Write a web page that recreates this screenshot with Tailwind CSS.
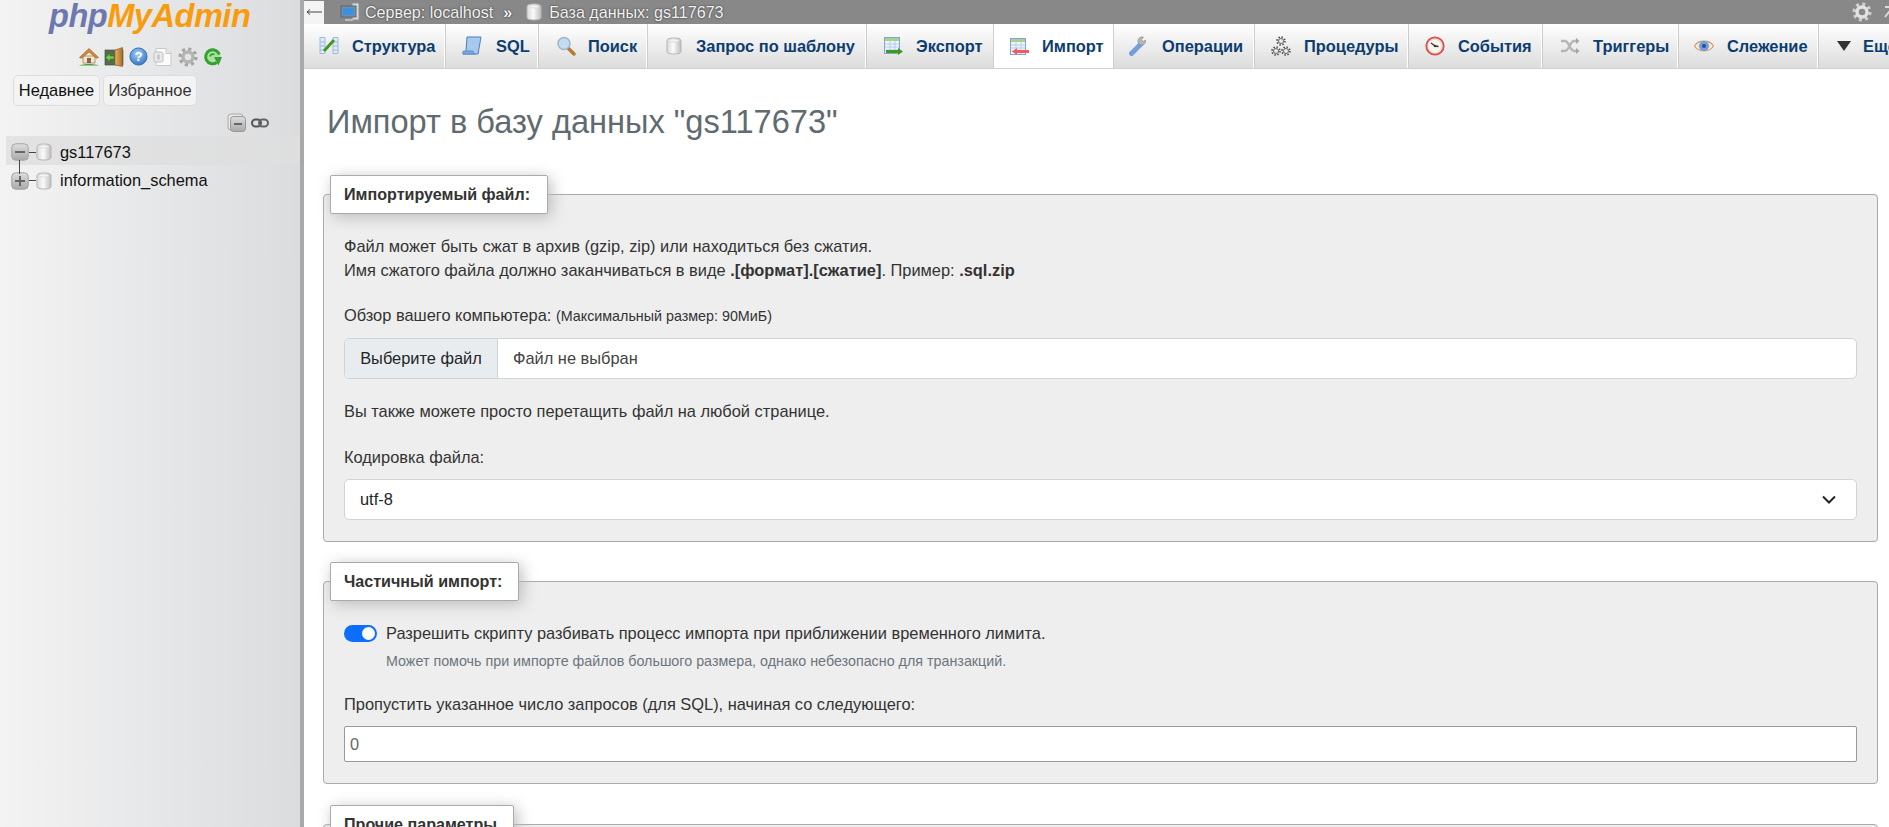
<!DOCTYPE html>
<html lang="ru">
<head>
<meta charset="UTF-8" />
<title>phpMyAdmin</title>
<script src="https://cdn.jsdelivr.net/npm/@tailwindcss/browser@4"></script>
</head>
<body class="h-screen overflow-hidden bg-white font-['Liberation_Sans',Arial,sans-serif] text-[16.4px] text-[#333]">
<svg class="absolute h-0 w-0" xmlns="http://www.w3.org/2000/svg">
	<defs>
		<linearGradient id="cyl" x1="0" x2="1" y1="0" y2="0"><stop offset="0" stop-color="#d8d8d8"/><stop offset=".45" stop-color="#fbfbfb"/><stop offset="1" stop-color="#bdbdbd"/></linearGradient>
		<linearGradient id="boxg" x1="0" x2="0" y1="0" y2="1"><stop offset="0" stop-color="#dedede"/><stop offset="1" stop-color="#a9a9a9"/></linearGradient>
		<linearGradient id="door" x1="0" x2="1" y1="0" y2="0"><stop offset="0" stop-color="#e8b464"/><stop offset="1" stop-color="#a86d2a"/></linearGradient>
		<radialGradient id="helpg" cx=".45" cy=".35" r=".7"><stop offset="0" stop-color="#a9d0f5"/><stop offset="1" stop-color="#2f6fc0"/></radialGradient>
	</defs>
	<symbol id="db" viewBox="0 0 16 18">
		<path d="M1 3.500C1 1.800 4 1 8 1s7 .8 7 2.500v11c0 1.700-3 2.500-7 2.500s-7-.8-7-2.500z" fill="url(#cyl)" stroke="#b5b5b5"/>
		<ellipse cx="8" cy="3.500" rx="5" ry="1.500" fill="#f4f4f4" stroke="#cfcfcf" stroke-width=".6"/>
	</symbol>
	<symbol id="gear" viewBox="0 0 20 20">
		<circle cx="10" cy="10" r="7.800" fill="none" stroke="#a3a3a3" stroke-width="3.600" stroke-dasharray="3 3.120"/>
		<circle cx="10" cy="10" r="5" fill="none" stroke="#b4b4b4" stroke-width="3.400"/>
	</symbol>
	<symbol id="gearlight" viewBox="0 0 20 20">
		<circle cx="10" cy="10" r="7.800" fill="none" stroke="#cfcfcf" stroke-width="3.600" stroke-dasharray="3 3.120"/>
		<circle cx="10" cy="10" r="5" fill="none" stroke="#e2e2e2" stroke-width="3.400"/>
	</symbol>
	<symbol id="cog" viewBox="0 0 20 20">
		<circle cx="10" cy="10" r="7.800" fill="none" stroke="#555" stroke-width="3.600" stroke-dasharray="3 3.120"/>
		<circle cx="10" cy="10" r="5" fill="#eee" stroke="#666" stroke-width="2"/>
	</symbol>
	<symbol id="sheet" viewBox="0 0 20 20">
		<rect x="1.500" y="1.500" width="15" height="16" fill="#eef4fb" stroke="#7fa6d6"/>
		<rect x="2" y="2" width="14" height="3" fill="#a9d08e"/>
		<path d="M2 8h14M2 11h14M2 14h14M7 5v12M12 5v12" stroke="#a9c4e4" stroke-width=".8"/>
	</symbol>
</svg>

<div class="flex h-full">
	<!-- navigation -->
	<aside class="w-[304px] shrink-0 border-r-4 border-[#a9a9a9] bg-gradient-to-r from-[#f3f3f3] to-[#dadcde]">
		<div class="h-[43px] pl-[49px] text-[32.600px] leading-[32px] font-bold italic tracking-[-0.5px] whitespace-nowrap text-[#f89c0e]"><span class="text-[#6c78af]">php</span>MyAdmin</div>
		<div class="mt-[3px] flex h-[21px] items-center pl-[79px] gap-[5px]">
			<!-- home -->
			<svg class="h-5 w-5" viewBox="0 0 20 20"><path d="M4 9v7h12V9z" fill="#f4e6c8" stroke="#a9824c" stroke-width=".8"/><path d="M.5 10.500 10 1.500l9.500 9-2 .8L10 5 2.500 11.300z" fill="#d58b32" stroke="#8a5520" stroke-width=".6"/><rect x="8" y="11" width="4" height="5" fill="#7a6a52"/><path d="M0 18.500c5-2 15-2 20 0z" fill="#4aa33c"/></svg>
			<!-- logout -->
			<svg class="h-5 w-5" viewBox="0 0 20 20"><rect x="1" y="3" width="18" height="15" fill="#5a6a50" stroke="#3c4638" stroke-width=".6"/><path d="M11 3 18.500.5v19L11 18z" fill="url(#door)" stroke="#8a5b22" stroke-width=".6"/><path d="M1.500 10.500 6 6.500v2.500h4v3H6v2.500z" fill="#6fd14c" stroke="#2f7d1c" stroke-width=".6"/></svg>
			<!-- help -->
			<svg class="h-[19px] w-[19px]" viewBox="0 0 20 20"><circle cx="10" cy="10" r="9" fill="url(#helpg)" stroke="#2f6bb0"/><text x="10" y="15" text-anchor="middle" font-family="Liberation Sans" font-weight="700" font-size="14" fill="#fff">?</text></svg>
			<!-- docs -->
			<svg class="h-5 w-5" viewBox="0 0 20 20"><path d="M3 1.500h10l5 5v12H3z" fill="#fbfbfb" stroke="#c8c8c8"/><path d="M13 1.500v5h5" fill="#e6e6e6" stroke="#c8c8c8"/><rect x="1" y="5" width="9" height="10" rx="1.500" fill="#e8e8e8" stroke="#c0c0c0"/><rect x="4.500" y="7.500" width="2" height="5" fill="#bbb"/></svg>
			<svg class="h-5 w-5"><use href="#gear"/></svg>
			<!-- reload -->
			<svg class="h-5 w-5" viewBox="0 0 20 20"><circle cx="9.500" cy="9.500" r="8" fill="#a9e3a0"/><path d="M13.800 15.500A7 7 0 1 1 16.300 7.500" fill="none" stroke="#37a033" stroke-width="3"/><path d="M11 10h8l-3.500 8.500z" fill="#37a033"/><path d="M7 9.500a3 3 0 0 1 4.500-2" fill="none" stroke="#37a033" stroke-width="1.800"/></svg>
		</div>
		<div class="mt-[8px] flex pl-[13px] gap-[3px]">
			<div class="flex h-[31px] w-[87px] items-center justify-center rounded-[5px] border border-[#ddd] bg-[#f3f3f3] text-[#111]">Недавнее</div>
			<div class="flex h-[31px] w-[94px] items-center justify-center rounded-[5px] border border-[#ddd] bg-[#f3f3f3] text-[#333]">Избранное</div>
		</div>
		<div class="mt-[6px] flex h-[22px] items-center pl-[227px] gap-[4px]">
			<svg class="h-5 w-5" viewBox="0 0 20 20"><rect x="1" y="1" width="15" height="16" rx="3" fill="#e8e8e8" stroke="#aaa"/><rect x="3.500" y="3.500" width="15" height="15" rx="3" fill="url(#boxg)" stroke="#999"/><rect x="7" y="10" width="8" height="2" fill="#666"/></svg>
			<svg class="h-[10px] w-[18px]" viewBox="0 0 18 10"><rect x="1" y="1.500" width="9" height="7" rx="3.500" fill="none" stroke="#555" stroke-width="2"/><rect x="8" y="1.500" width="9" height="7" rx="3.500" fill="none" stroke="#666" stroke-width="2"/></svg>
		</div>
		<div class="relative ml-[6px] mt-[2px]">
			<div class="absolute left-[13px] top-[24px] h-[14px] w-px bg-[#444]"></div>
			<div class="flex h-[29px] items-center bg-[#dfdfdf]/80 pl-[5px] pt-[3px]">
				<svg class="h-[18px] w-[18px] shrink-0" viewBox="0 0 18 18"><rect x=".75" y=".75" width="16.500" height="16.500" rx="4" fill="url(#boxg)" stroke="#a5a5a5"/><rect x="4" y="8" width="10" height="2" fill="#666"/></svg>
				<div class="h-px w-[7px] bg-[#444]"></div>
				<svg class="h-[18px] w-4 shrink-0"><use href="#db"/></svg>
				<span class="ml-[8px] text-[#111]">gs117673</span>
			</div>
			<div class="flex h-[28px] items-center pl-[5px] pt-[3px]">
				<svg class="h-[18px] w-[18px] shrink-0" viewBox="0 0 18 18"><rect x=".75" y=".75" width="16.500" height="16.500" rx="4" fill="url(#boxg)" stroke="#a5a5a5"/><path d="M4 8h4V4h2v4h4v2h-4v4H8v-4H4z" fill="#666"/></svg>
				<div class="h-px w-[7px] bg-[#444]"></div>
				<svg class="h-[18px] w-4 shrink-0"><use href="#db"/></svg>
				<span class="ml-[8px] text-[#111]">information_schema</span>
			</div>
		</div>
	</aside>

	<main class="min-w-0 flex-1">
		<!-- server breadcrumb -->
		<div class="flex h-[24px] items-center overflow-hidden whitespace-nowrap bg-[#888] text-[16.100px] text-[#f2f2f2] [text-shadow:0_0_2px_#222]">
			<div class="flex h-[23px] w-[20px] shrink-0 items-center justify-center bg-[#f4f4f4]"><svg class="h-2 w-4" viewBox="0 0 16 8"><path d="M1 4h15M1 4l3-2.500M1 4l3 2.500" fill="none" stroke="#444"/></svg></div>
			<svg class="ml-4 h-5 w-5 shrink-0" viewBox="0 0 20 20"><rect x="12" y="1" width="7" height="17" fill="#d9d9d9" stroke="#8e8e8e"/><rect x="1" y="4" width="15" height="11" fill="#6f8fae" stroke="#5c6670"/><rect x="3" y="6" width="11" height="7" fill="#3d8fe0"/><path d="M5 17h8v2H5z" fill="#b9b9b9"/><rect x="14" y="6" width="3" height="1" fill="#4caf50"/></svg>
			<span class="ml-[5px]">Сервер: localhost</span>
			<span class="ml-[10px] font-bold">»</span>
			<svg class="ml-[14px] h-[18px] w-4 shrink-0"><use href="#db"/></svg>
			<span class="ml-[7px]">База данных: gs117673</span>
			<svg class="ml-auto h-5 w-5 shrink-0"><use href="#gearlight"/></svg>
			<svg class="ml-[12px] mr-[-7px] h-3 w-3 shrink-0" viewBox="0 0 12 12"><path d="M1 1h8v8M9 1 1 11" fill="none" stroke="#ddd" stroke-width="2"/></svg>
		</div>
		<!-- tabs -->
		<nav class="flex h-[45px] overflow-hidden border-b border-[#d0d0d0] font-bold whitespace-nowrap text-[#0c3d70]">
			<a class="flex w-[142px] shrink-0 items-center gap-[13px] border-r border-r-[#ccc] bg-gradient-to-b from-white to-[#dcdcdc] pl-[15px] shadow-[inset_-1px_0_0_#fff]">
				<svg class="h-5 w-5 shrink-0" viewBox="0 0 20 20"><path d="M1 1.500h5v16H1zM14 1.500h5v16h-5z" fill="#dfeaf6" stroke="#9dbbdf"/><path d="M1 6h5M1 10h5M1 14h5M14 6h5M14 10h5M14 14h5" stroke="#9dbbdf"/><path d="M5 15 15 4" stroke="#3f9a22" stroke-width="3"/></svg>
				<span>Структура</span>
			</a>
			<a class="flex w-[93px] shrink-0 items-center gap-[14px] border-r border-r-[#ccc] bg-gradient-to-b from-white to-[#dcdcdc] pl-[16px] shadow-[inset_-1px_0_0_#fff]">
				<svg class="h-5 w-5 shrink-0" viewBox="0 0 20 20"><path d="M5 1h14l-3 17H1c2 0 3-2 3-3z" fill="#a9c8ee" stroke="#4a7fc2"/><path d="M1 18c-1-2 0-3 1-3h9c0 1 0 3 2 3z" fill="#7dabe0" stroke="#4a7fc2" stroke-width=".7"/></svg>
				<span>SQL</span>
			</a>
			<a class="flex w-[109px] shrink-0 items-center gap-[12px] border-r border-r-[#ccc] bg-gradient-to-b from-white to-[#dcdcdc] pl-[17px] shadow-[inset_-1px_0_0_#fff]">
				<svg class="h-5 w-5 shrink-0" viewBox="0 0 20 20"><path d="M12 12l6 6" stroke="#b57a35" stroke-width="3.500" stroke-linecap="round"/><circle cx="8" cy="7.500" r="6" fill="#c4dcf3" stroke="#9fb4c8" stroke-width="1.500"/></svg>
				<span>Поиск</span>
			</a>
			<a class="flex w-[219px] shrink-0 items-center gap-[14px] border-r border-r-[#ccc] bg-gradient-to-b from-white to-[#dcdcdc] pl-[18px] shadow-[inset_-1px_0_0_#fff]">
				<svg class="h-[18px] w-4 shrink-0"><use href="#db"/></svg>
				<span>Запрос по шаблону</span>
			</a>
			<a class="flex w-[126px] shrink-0 items-center gap-[13px] bg-gradient-to-b from-white to-[#dcdcdc] pl-[16px]">
				<svg class="h-5 w-5 shrink-0" viewBox="0 0 20 20"><use href="#sheet"/><path d="M3 14h12v-2l5 3.500-5 3.500v-2H3z" fill="#3f9a22"/></svg>
				<span>Экспорт</span>
			</a>
			<a class="flex h-[45px] w-[121px] shrink-0 items-center gap-[13px] border-x border-x-[#d0d0d0] bg-white pl-[15px]">
				<svg class="h-5 w-5 shrink-0" viewBox="0 0 20 20"><use href="#sheet"/><path d="M20 13H8v-2l-5 3.500L8 18v-2h12z" fill="#f25b5b"/></svg>
				<span>Импорт</span>
			</a>
			<a class="flex w-[141px] shrink-0 items-center gap-[13px] border-r border-r-[#ccc] bg-gradient-to-b from-white to-[#dcdcdc] pl-[15px] shadow-[inset_-1px_0_0_#fff]">
				<svg class="h-5 w-5 shrink-0" viewBox="0 0 20 20"><path d="M2.500 17.500 12 8" stroke="#6fa0dc" stroke-width="5" stroke-linecap="round"/><path d="M12 9a4 4 0 0 1 2-8l.5.2-2 2.300 1.500 2 2.500-1.500A4 4 0 0 1 12 9z" fill="#b5b5b5" stroke="#888" stroke-width=".6"/></svg>
				<span>Операции</span>
			</a>
			<a class="flex w-[154px] shrink-0 items-center gap-[13px] border-r border-r-[#ccc] bg-gradient-to-b from-white to-[#dcdcdc] pl-[16px] shadow-[inset_-1px_0_0_#fff]">
				<svg class="h-5 w-5 shrink-0" viewBox="0 0 20 20"><use href="#cog" x="5" y="0" width="10" height="10"/><use href="#cog" x="0" y="10" width="10" height="10"/><use href="#cog" x="10" y="10" width="10" height="10"/></svg>
				<span>Процедуры</span>
			</a>
			<a class="flex w-[134px] shrink-0 items-center gap-[13px] border-r border-r-[#ccc] bg-gradient-to-b from-white to-[#dcdcdc] pl-[16px] shadow-[inset_-1px_0_0_#fff]">
				<svg class="h-5 w-5 shrink-0" viewBox="0 0 20 20"><circle cx="10" cy="10" r="8.700" fill="#e4e0d8" stroke="#e04a4a" stroke-width="1.800"/><circle cx="10" cy="10" r="6.300" fill="#f7f5f0"/><path d="M10 10 6 7M10 10l3.500.5" stroke="#333" stroke-width="1.300"/><circle cx="10" cy="10" r="1.200" fill="#333"/></svg>
				<span>События</span>
			</a>
			<a class="flex w-[136px] shrink-0 items-center gap-[13px] border-r border-r-[#ccc] bg-gradient-to-b from-white to-[#dcdcdc] pl-[17px] shadow-[inset_-1px_0_0_#fff]">
				<svg class="h-5 w-5 shrink-0" viewBox="0 0 20 20"><path d="M1 5h4c4 0 5 10 9 10h3M1 15h4c4 0 5-10 9-10h3" fill="none" stroke="#b5b5b5" stroke-width="2.400"/><path d="M16 2l3.500 3L16 8zM16 12l3.500 3-3.500 3z" fill="#a5a5a5"/></svg>
				<span>Триггеры</span>
			</a>
			<a class="flex w-[140px] shrink-0 items-center gap-[13px] border-r border-r-[#ccc] bg-gradient-to-b from-white to-[#dcdcdc] pl-[15px] shadow-[inset_-1px_0_0_#fff]">
				<svg class="h-5 w-5 shrink-0" viewBox="0 0 20 20"><path d="M.5 10C4 3.500 16 3.500 19.500 10 16 16.500 4 16.500.5 10z" fill="#f3e9dd" stroke="#d59a62" stroke-width="1.200"/><circle cx="10" cy="10" r="5" fill="#6f9fe0"/><circle cx="10" cy="10" r="2" fill="#2a4d86"/></svg>
				<span>Слежение</span>
			</a>
			<a class="flex w-[80px] shrink-0 items-center gap-[12px] bg-gradient-to-b from-white to-[#dcdcdc] pl-[18px]">
				<svg class="h-[10px] w-[14px] shrink-0" viewBox="0 0 14 10"><path d="M0 0h14L7 10z" fill="#333"/></svg>
				<span>Ещё</span>
			</a>
		</nav>

		<div class="pt-[31px] pl-[19px] pr-[11px]">
			<h2 class="ml-[4px] h-[43px] text-[32.600px] leading-[43px] text-[#5f6b70]">Импорт в базу данных "gs117673"</h2>

			<fieldset class="mt-[32px] min-w-0 rounded-[4px] border border-[#aaa] bg-[#eee] px-[20px] pb-[21px]">
				<legend class="-ml-[14px] h-[39px] w-[218px] rounded-[2px] border border-[#aaa] bg-white pl-[13px] text-[16.100px] leading-[37px] font-bold text-[#333] shadow-[3px_3px_15px_#bbb]">Импортируемый файл:</legend>
				<p class="mt-[20px] leading-[24px]">Файл может быть сжат в архив (gzip, zip) или находиться без сжатия.<br />Имя сжатого файла должно заканчиваться в виде <b>.[формат].[сжатие]</b>. Пример: <b>.sql.zip</b></p>
				<p class="mt-[21px] leading-[24px]">Обзор вашего компьютера: <span class="text-[14.300px]">(Максимальный размер: 90МиБ)</span></p>
				<div class="mt-[10px] flex h-[41px] items-stretch overflow-hidden rounded-[5px] border border-[#ced4da] bg-white">
					<div class="flex w-[153px] items-center justify-center border-r border-[#ced4da] bg-[#e9ecef] text-[#212529]">Выберите файл</div>
					<div class="flex items-center pl-[15px] text-[#444]">Файл не выбран</div>
				</div>
				<p class="mt-[20px] leading-[24px]">Вы также можете просто перетащить файл на любой странице.</p>
				<p class="mt-[22px] leading-[24px]">Кодировка файла:</p>
				<div class="mt-[10px] flex h-[41px] items-center justify-between rounded-[5px] border border-[#ced4da] bg-white pl-[15px] pr-[20px] text-[#212529]">
					<span>utf-8</span>
					<svg class="h-[9px] w-[14px]" viewBox="0 0 14 9"><path d="M1 1.500 7 7.500l6-6" fill="none" stroke="#212529" stroke-width="2"/></svg>
				</div>
			</fieldset>

			<fieldset class="mt-[20px] min-w-0 rounded-[4px] border border-[#aaa] bg-[#eee] px-[20px] pb-[21px]">
				<legend class="-ml-[14px] h-[39px] w-[189px] rounded-[2px] border border-[#aaa] bg-white pl-[13px] text-[16.100px] leading-[36px] font-bold text-[#333] shadow-[3px_3px_15px_#bbb]">Частичный импорт:</legend>
				<div class="mt-[20px] flex h-[24px] items-center">
					<div class="flex h-[17px] w-[33px] items-center justify-end rounded-full bg-[#0d6efd] pr-[2px]"><div class="h-[13px] w-[13px] rounded-full bg-white"></div></div>
					<span class="ml-[9px]">Разрешить скрипту разбивать процесс импорта при приближении временного лимита.</span>
				</div>
				<p class="mt-[6px] ml-[42px] h-[20px] text-[14.300px] leading-[20px] text-[#6c757d]">Может помочь при импорте файлов большого размера, однако небезопасно для транзакций.</p>
				<p class="mt-[21px] leading-[24px]">Пропустить указанное число запросов (для SQL), начиная со следующего:</p>
				<div class="mt-[10px] flex h-[36px] items-center rounded-[2px] border border-[#999] bg-white pl-[5px] text-[#666]">0</div>
			</fieldset>

			<fieldset class="mt-[21px] min-w-0 rounded-[4px] border border-[#aaa] bg-[#eee] px-[20px] pb-[20px]">
				<legend class="-ml-[14px] h-[39px] w-[184px] rounded-[2px] border border-[#aaa] bg-white pl-[13px] text-[16.100px] leading-[37px] font-bold text-[#333] shadow-[3px_3px_15px_#bbb]">Прочие параметры</legend>
			</fieldset>
		</div>
	</main>
</div>
</body>
</html>
